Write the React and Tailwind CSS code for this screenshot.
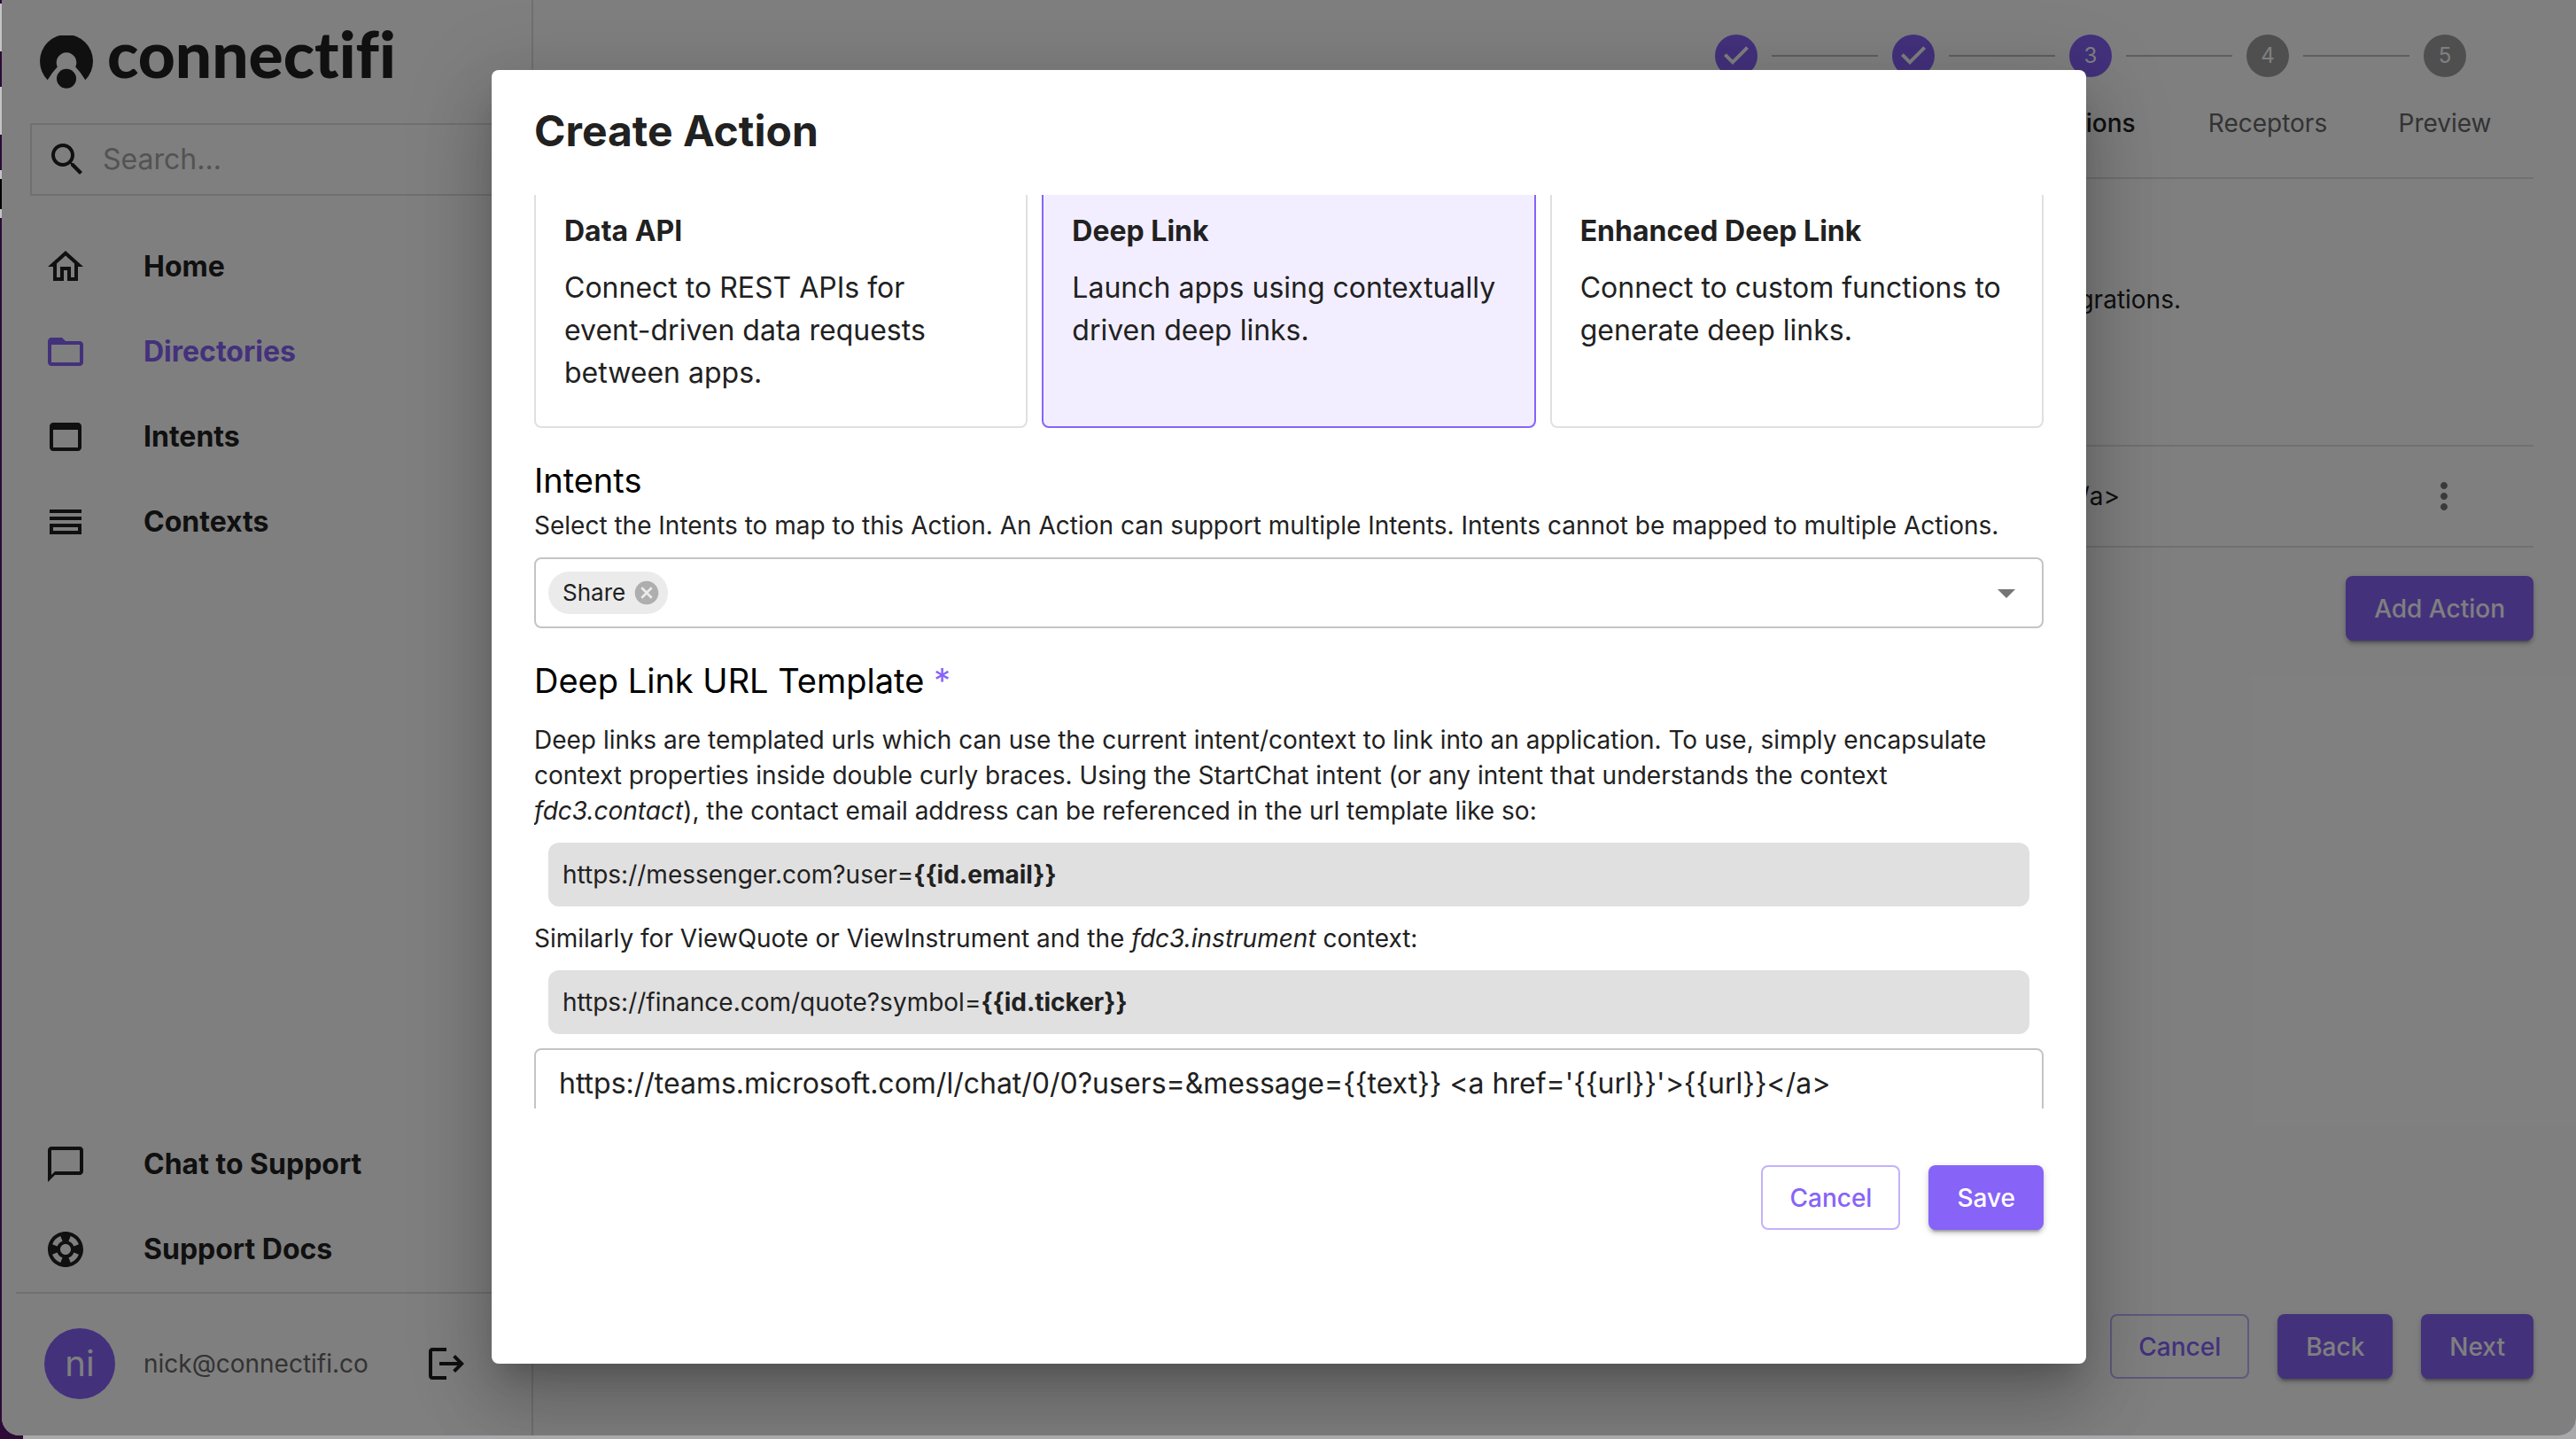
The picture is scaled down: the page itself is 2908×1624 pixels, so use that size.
const P = {
  search: "M15.5 14h-.79l-.28-.27C15.41 12.59 16 11.11 16 9.5 16 5.91 13.09 3 9.5 3S3 5.91 3 9.5 5.91 16 9.5 16c1.61 0 3.09-.59 4.23-1.57l.27.28v.79l5 4.99L20.49 19l-4.99-5zm-6 0C7.01 14 5 11.99 5 9.5S7.01 5 9.5 5 14 7.01 14 9.5 11.99 14 9.5 14z",
  home: "m12 5.69 5 4.5V18h-2v-6H9v6H7v-7.81l5-4.5M12 3 2 12h3v8h6v-6h2v6h6v-8h3L12 3z",
  folder: "M20 6h-8l-2-2H4c-1.1 0-1.99.9-1.99 2L2 18c0 1.1.9 2 2 2h16c1.1 0 2-.9 2-2V8c0-1.1-.9-2-2-2zm0 12H4V8h16v10z",
  window: "M19 4H5c-1.11 0-2 .9-2 2v12c0 1.1.89 2 2 2h14c1.1 0 2-.9 2-2V6c0-1.1-.89-2-2-2zm0 14H5V8h14v10z",
  split: "M3 19h18v-6H3v6zm2-4h14v2H5v-2zM3 9h18v2H3V9zm0-4h18v2H3V5z",
  chat: "M20 2H4c-1.1 0-2 .9-2 2v18l4-4h14c1.1 0 2-.9 2-2V4c0-1.1-.9-2-2-2zm0 14H6l-2 2V4h16v12z",
  support: "M12 2C6.48 2 2 6.48 2 12s4.48 10 10 10 10-4.48 10-10S17.52 2 12 2zm7.46 7.12-2.78 1.15a4.982 4.982 0 0 0-2.95-2.94l1.15-2.78c2.1.8 3.77 2.47 4.58 4.57zM12 15c-1.66 0-3-1.34-3-3s1.34-3 3-3 3 1.34 3 3-1.34 3-3 3zM9.13 4.54l1.17 2.78a5 5 0 0 0-2.98 2.97L4.54 9.13a7.984 7.984 0 0 1 4.59-4.59zM4.54 14.87l2.78-1.15a4.968 4.968 0 0 0 2.97 2.96l-1.17 2.78a7.996 7.996 0 0 1-4.58-4.59zm10.34 4.59-1.15-2.78a4.978 4.978 0 0 0 2.95-2.97l2.78 1.17a8.007 8.007 0 0 1-4.58 4.58z",
  logout: "m17 7-1.41 1.41L18.17 11H8v2h10.17l-2.58 2.58L17 17l5-5zM4 5h8V3H4c-1.1 0-2 .9-2 2v14c0 1.1.9 2 2 2h8v-2H4z",
  more: "M12 8c1.1 0 2-.9 2-2s-.9-2-2-2-2 .9-2 2 .9 2 2 2zm0 2c-1.1 0-2 .9-2 2s.9 2 2 2 2-.9 2-2-.9-2-2-2zm0 6c-1.1 0-2 .9-2 2s.9 2 2 2 2-.9 2-2-.9-2-2-2z",
  cancel: "M12 2C6.47 2 2 6.47 2 12s4.47 10 10 10 10-4.47 10-10S17.53 2 12 2zm5 13.59L15.59 17 12 13.41 8.41 17 7 15.59 10.59 12 7 8.41 8.41 7 12 10.59 15.59 7 17 8.41 13.41 12 17 15.59z",
  drop: "m7 10 5 5 5-5z",
  check: "M12 0a12 12 0 1 0 0 24 12 12 0 0 0 0-24zm-2 17l-5-5 1.4-1.4 3.6 3.6 7.6-7.6L19 8l-9 9z",
};

function Icon({ name, className = "size-12" }) {
  return (
    <svg viewBox="0 0 24 24" fill="currentColor" aria-hidden="true" className={`shrink-0 ${className}`}>
      <path d={P[name]} />
    </svg>
  );
}

const BTN = "h-[73px] cursor-pointer rounded-lg text-[28px] font-medium";
const FILLED = `${BTN} px-8 bg-[#8763f8] text-white shadow-[0_6px_2px_-4px_rgba(0,0,0,0.2),0_4px_4px_0_rgba(0,0,0,0.14),0_2px_10px_0_rgba(0,0,0,0.12)]`;
const OUTLINED = `${BTN} px-[30px] border-2 border-[#c3b1fb] text-[#8763f8]`;

function NavItem({ icon, label, active }) {
  return (
    <li>
      <a
        href="#"
        aria-current={active ? "page" : undefined}
        className={`flex h-24 items-center gap-16 pl-12 text-[32px] font-bold ${active ? "text-[#8763f8]" : "text-[#212121]"}`}
      >
        <Icon name={icon} />
        {label}
      </a>
    </li>
  );
}

function Logo() {
  return (
    <a href="#" aria-label="connectifi" className="flex h-[100px] items-end gap-4 pl-[43px] text-[#212121]">
      <svg viewBox="0 0 60 60" fill="currentColor" aria-hidden="true" className="size-[60px] shrink-0">
        <path d="M8.700 50.200 A30 30 0 1 1 51.300 50.200 Q46.500 42 40.200 35.500 A11.300 11.300 0 1 0 19.800 35.500 Q13.500 42 8.700 50.200 Z" />
        <circle cx="30" cy="48.700" r="11" />
      </svg>
      <span className="font-['Lato',sans-serif] text-[73px] leading-[80px] font-black [font-variant-ligatures:none]">connectifi</span>
    </a>
  );
}

function Sidebar() {
  return (
    <aside className="flex w-[600px] shrink-0 flex-col border-r-2 border-[#e0e0e0] pb-[2px]">
      <Logo />
      <label className="mx-8 mt-[39px] flex h-[82px] items-center gap-4 border-2 border-[#e0e0e0] pl-4">
        <Icon name="search" />
        <input
          type="text"
          aria-label="Search"
          placeholder="Search..."
          className="min-w-0 flex-1 bg-transparent text-[32px] outline-none placeholder:text-[#a6a6a6]"
        />
      </label>
      <ul className="mt-8">
        <NavItem icon="home" label="Home" />
        <NavItem icon="folder" label="Directories" active />
        <NavItem icon="window" label="Intents" />
        <NavItem icon="split" label="Contexts" />
      </ul>
      <ul className="mt-auto">
        <NavItem icon="chat" label="Chat to Support" />
        <NavItem icon="support" label="Support Docs" />
      </ul>
      <div className="mx-4 flex h-[160px] items-center border-t-2 border-[#e0e0e0] pl-8">
        <span className="flex size-20 items-center justify-center rounded-full bg-[#8763f8] text-[40px] text-white">ni</span>
        <span className="ml-8 text-[28px] text-[#666]">nick@connectifi.co</span>
        <button type="button" aria-label="Log out" className="ml-16 cursor-pointer">
          <Icon name="logout" />
        </button>
      </div>
    </aside>
  );
}

const STEPS = [
  { label: "Details", state: "done" },
  { label: "Access", state: "done" },
  { label: "Actions", state: "current" },
  { label: "Receptors", state: "todo" },
  { label: "Preview", state: "todo" },
];

function Stepper() {
  return (
    <ol className="ml-auto grid w-[1000px] grid-cols-5">
      {STEPS.map(({ label, state }, i) => (
        <li key={label} className="flex flex-col items-center">
          <div className="flex w-full items-center gap-4">
            <span className={`h-[2px] flex-1 ${i === 0 ? "bg-transparent" : "bg-[#bdbdbd]"}`} />
            {state === "done" ? (
              <Icon name="check" className="size-12 text-[#8763f8]" />
            ) : (
              <span
                className={`flex size-12 items-center justify-center rounded-full text-2xl text-white ${state === "current" ? "bg-[#8763f8]" : "bg-[#9e9e9e]"}`}
              >
                {i + 1}
              </span>
            )}
            <span className={`h-[2px] flex-1 ${i === STEPS.length - 1 ? "bg-transparent" : "bg-[#bdbdbd]"}`} />
          </div>
          <span
            className={`mt-8 text-[28px] leading-10 ${state === "todo" ? "text-[#666]" : "font-medium text-[#212121]"}`}
          >
            {label}
          </span>
        </li>
      ))}
    </ol>
  );
}

const TEMPLATE = "https://teams.microsoft.com/l/chat/0/0?users=&message={{text}} <a href='{{url}}'>{{url}}</a>";

function Main() {
  return (
    <main className="flex min-w-0 flex-1 flex-col px-12 pt-[39px] pb-16">
      <Stepper />
      <div className="mt-[41px] border-t-2 border-[#e0e0e0]" />
      <p className="mt-[116px] w-[1812px] text-right text-[28px] leading-10">integrations.</p>
      <div className="mt-36 flex h-[116px] items-center justify-between border-y-2 border-[#e0e0e0] pr-[77px] pl-[487px] text-[28px]">
        <span>{TEMPLATE}</span>
        <button type="button" aria-label="Action menu" className="cursor-pointer text-[#757575]">
          <Icon name="more" />
        </button>
      </div>
      <button type="button" className={`mt-8 self-end ${FILLED}`}>
        Add Action
      </button>
      <div className="mt-auto flex justify-end gap-8">
        <button type="button" className={OUTLINED}>Cancel</button>
        <button type="button" className={FILLED}>Back</button>
        <button type="button" className={FILLED}>Next</button>
      </div>
    </main>
  );
}

function TypeCard({ title, text, selected }) {
  return (
    <button
      type="button"
      aria-pressed={!!selected}
      className={`flex h-[280px] cursor-pointer flex-col rounded-lg border-2 px-8 pt-8 text-left text-[32px] leading-[48px] ${selected ? "border-[#8763f8] bg-[#f2eeff]" : "border-[#e0e0e0] bg-white"}`}
    >
      <span className="font-bold">{title}</span>
      <span className="mt-4">{text}</span>
    </button>
  );
}

function CodeBox({ url, token }) {
  return (
    <div className="m-4 rounded-xl bg-[#e0e0e0] p-4">
      {url}
      <b className="font-bold">{token}</b>
    </div>
  );
}

function CreateActionDialog() {
  return (
    <section
      role="dialog"
      aria-modal="true"
      aria-labelledby="dialog-title"
      className="flex h-full w-full max-w-[1800px] flex-col rounded-lg bg-white px-12 pt-[37px] text-[#212121] shadow-[0_22px_30px_-14px_rgba(0,0,0,0.2),0_48px_76px_6px_rgba(0,0,0,0.14),0_18px_92px_16px_rgba(0,0,0,0.12)]"
    >
      <h1 id="dialog-title" className="text-5xl leading-[64px] font-bold">
        Create Action
      </h1>
      <div className="mt-10 min-h-0 flex-1 overflow-hidden text-[28px] leading-10">
        <div className="-mt-[17px] grid grid-cols-3 gap-4">
          <TypeCard title="Data API" text="Connect to REST APIs for event-driven data requests between apps." />
          <TypeCard title="Deep Link" text="Launch apps using contextually driven deep links." selected />
          <TypeCard title="Enhanced Deep Link" text="Connect to custom functions to generate deep links." />
        </div>
        <h2 className="mt-7 text-[38px] leading-[62px] text-black">Intents</h2>
        <p>Select the Intents to map to this Action. An Action can support multiple Intents. Intents cannot be mapped to multiple Actions.</p>
        <div className="mt-4 flex h-20 items-center rounded-lg border-2 border-[#c4c4c4] pr-4 pl-3.5">
          <span className="flex h-12 items-center gap-2 rounded-full bg-[#ebebeb] pr-2 pl-4 text-[26px]">
            Share
            <button type="button" aria-label="Remove Share" className="cursor-pointer text-[#aeaeae]">
              <Icon name="cancel" className="size-8" />
            </button>
          </span>
          <input type="text" aria-label="Intents" className="min-w-0 flex-1 outline-none" />
          <button type="button" aria-label="Open" className="cursor-pointer text-[#757575]">
            <Icon name="drop" />
          </button>
        </div>
        <h2 className="mt-7 text-[38px] leading-[62px] text-black">
          Deep Link URL Template <span className="text-[#8763f8]">*</span>
        </h2>
        <p className="mt-4">
          Deep links are templated urls which can use the current intent/context to link into an application. To use, simply encapsulate
          context properties inside double curly braces. Using the StartChat intent (or any intent that understands the context{" "}
          <i>fdc3.contact</i>), the contact email address can be referenced in the url template like so:
        </p>
        <CodeBox url="https://messenger.com?user=" token="{{id.email}}" />
        <p>
          Similarly for ViewQuote or ViewInstrument and the <i>fdc3.instrument</i> context:
        </p>
        <CodeBox url="https://finance.com/quote?symbol=" token="{{id.ticker}}" />
        <textarea
          aria-label="Deep Link URL Template"
          defaultValue={TEMPLATE}
          className="block h-28 w-full resize-none rounded-lg border-2 border-[#c4c4c4] px-[26px] pt-3.5 text-[32px] leading-[48px] outline-none"
        />
      </div>
      <div className="mt-16 flex justify-end gap-8 pb-[151px]">
        <button type="button" className={OUTLINED}>Cancel</button>
        <button type="button" className={FILLED}>Save</button>
      </div>
    </section>
  );
}

/* Sliver of the desktop that shows to the left of the window */
function DesktopEdge() {
  return (
    <div className="flex w-[2px] shrink-0 flex-col">
      <span className="mt-1 h-[54px] bg-[#c4c4c4]" />
      <span className="mt-10 h-[54px] bg-[#c4c4c4]" />
      <span className="mt-10 h-2.5 bg-[#c4c4c4]" />
      <span className="h-[34px] bg-black" />
      <span className="h-2.5 bg-[#c4c4c4]" />
    </div>
  );
}

export default function App() {
  return (
    <div className="flex h-screen bg-[linear-gradient(to_right,#2d0a38_26px,#a9a8ab_26px)] pb-1 font-['Inter',sans-serif]">
      <DesktopEdge />
      <div className="relative flex h-full min-w-0 flex-1 overflow-hidden rounded-b-[20px] bg-white text-[#212121]">
        <Sidebar />
        <Main />
        <div className="absolute inset-0 flex justify-center bg-black/50 pt-[79px] pb-[81px]">
          <CreateActionDialog />
        </div>
      </div>
    </div>
  );
}
